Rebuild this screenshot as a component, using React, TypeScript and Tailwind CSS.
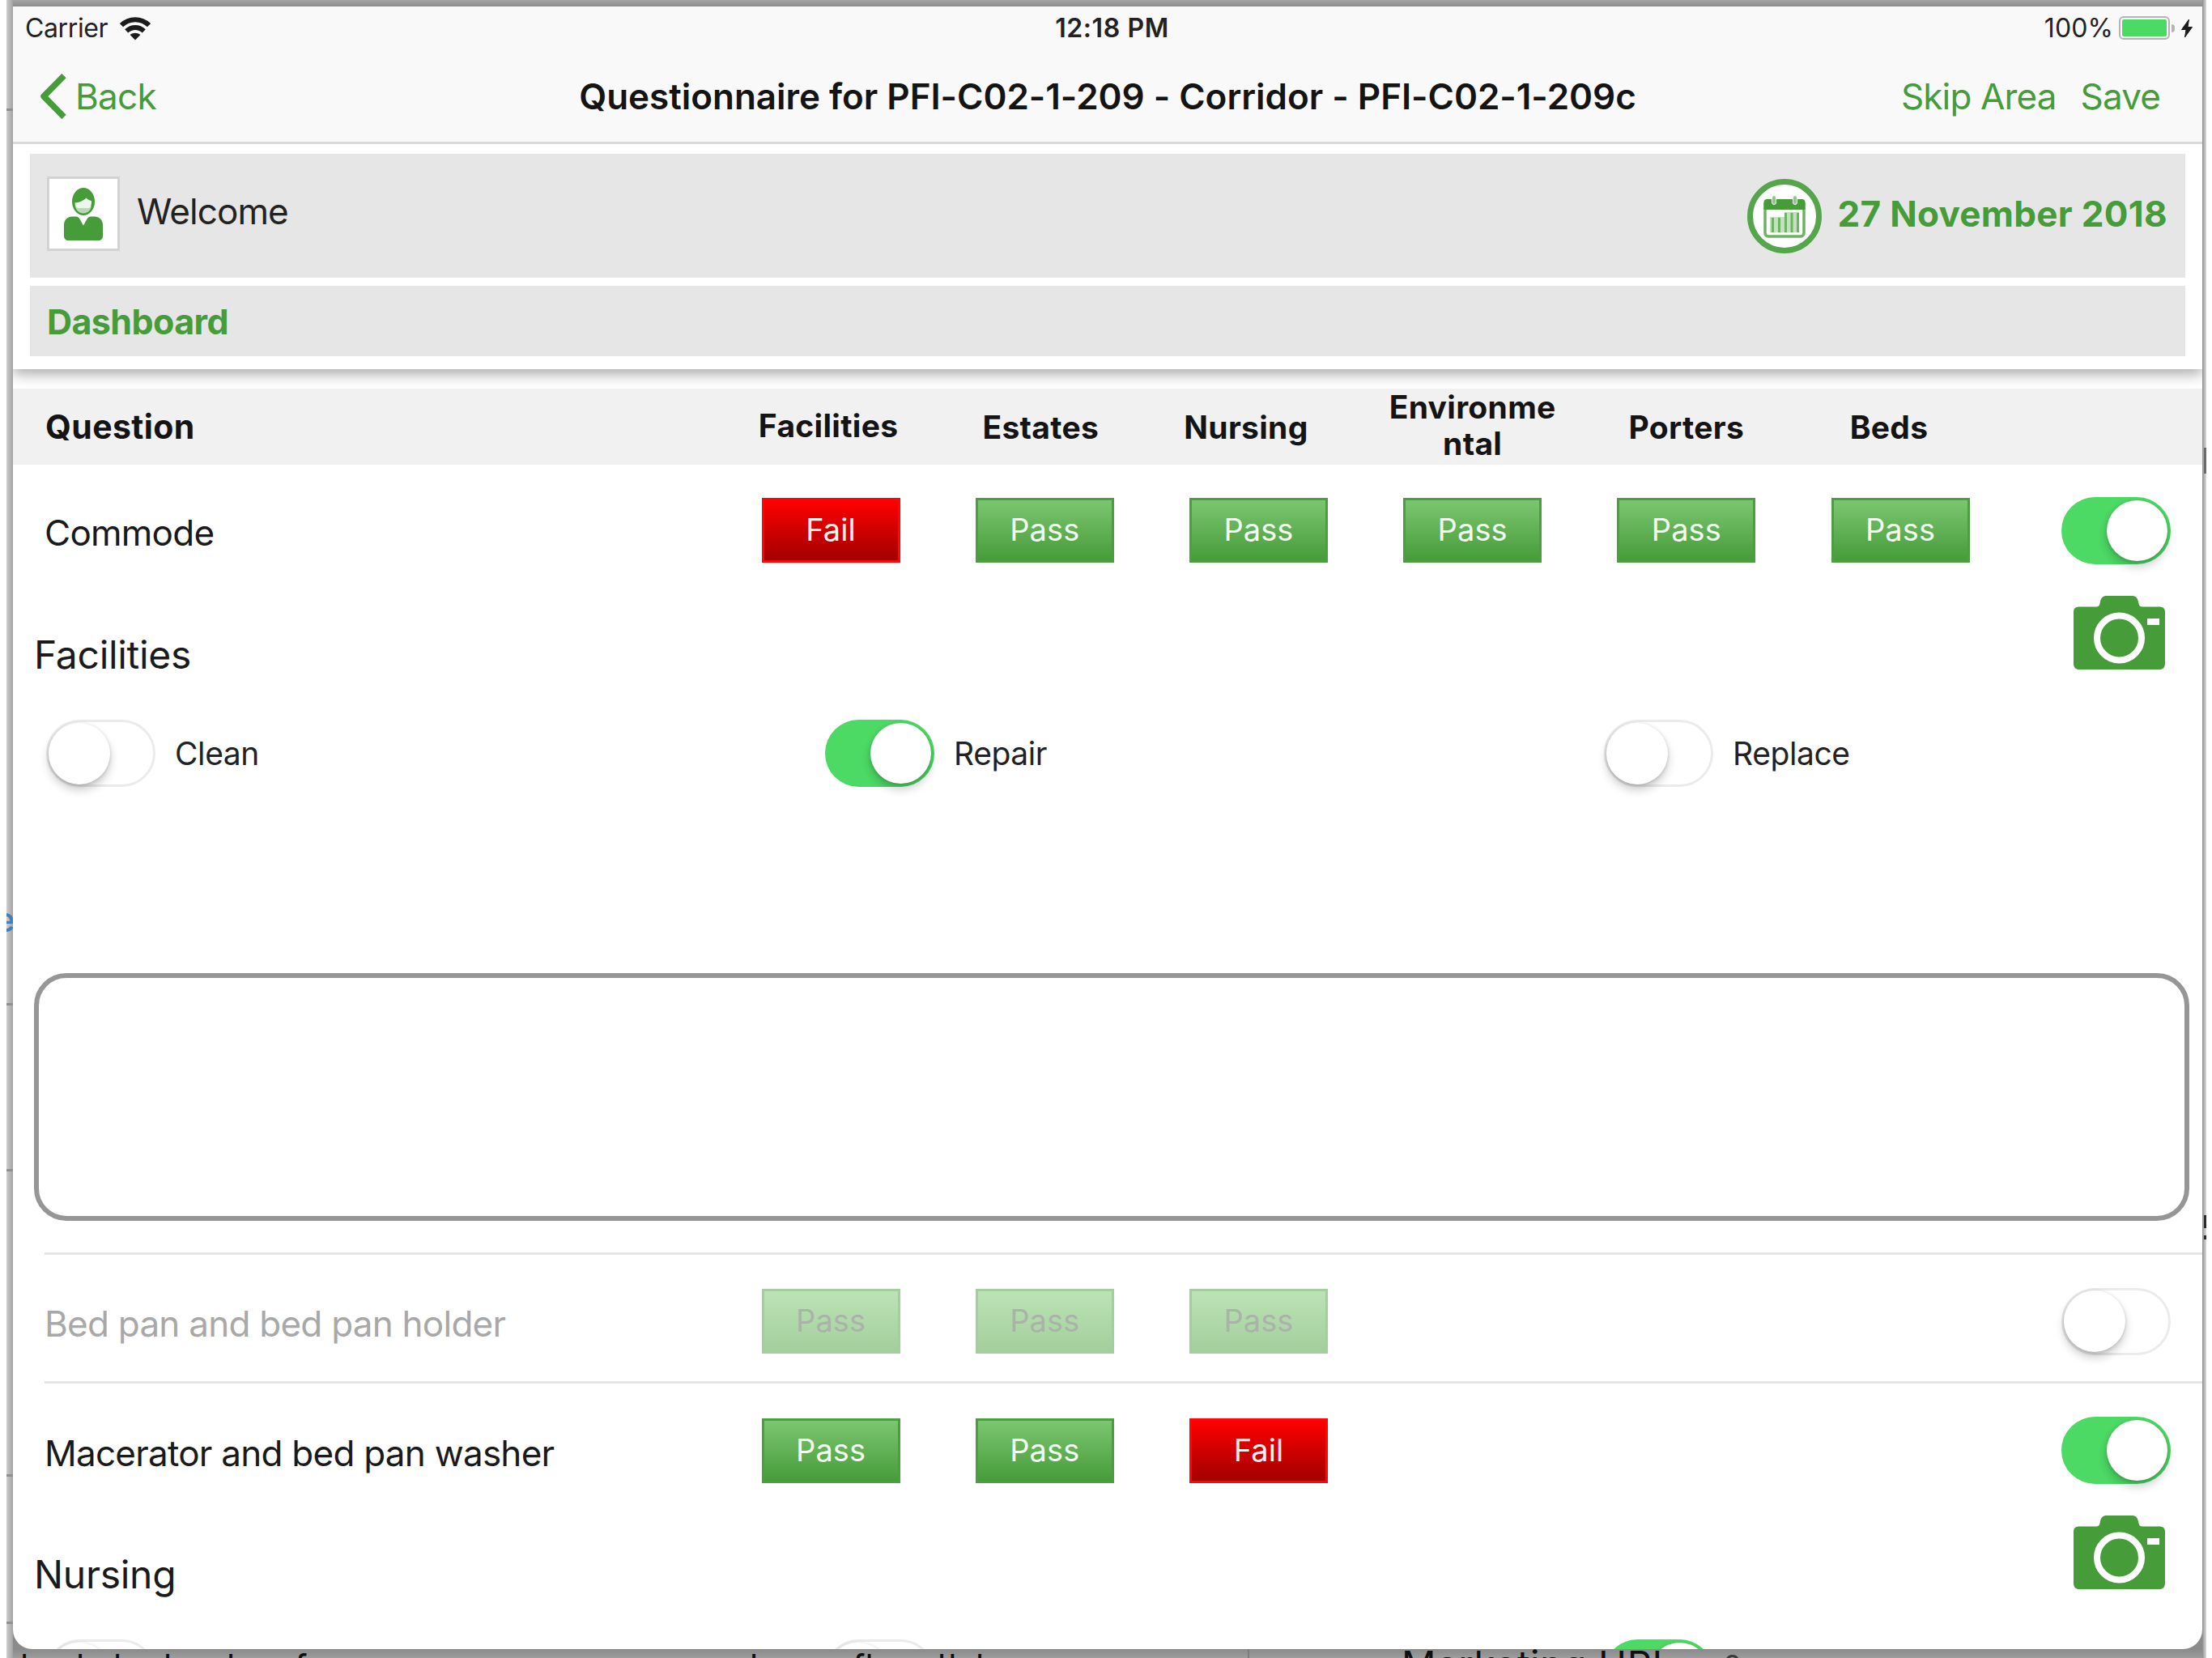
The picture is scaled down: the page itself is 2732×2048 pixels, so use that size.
import type { ReactNode } from "react";

type Verdict = "pass" | "fail";

function WifiIcon() {
  return (
    <svg className="mt-[2px] h-[29px] w-[38px]" viewBox="0 0 38 29" fill="none" stroke="#1c1c1c" strokeWidth="6">
      <path d="M2 10.2C11.5 0.9 26.5 0.9 36 10.2" />
      <path d="M8.2 17.4C14.5 11.6 23.5 11.6 29.8 17.4" />
      <path d="M19 28.6L12.6 22C16.4 18.9 21.6 18.9 25.4 22Z" fill="#1c1c1c" stroke="none" />
    </svg>
  );
}

function BatteryIcon() {
  return (
    <div className="flex items-center">
      <div className="h-[29px] w-[63px] rounded-[6px] border-[2.5px] border-[#b4b4b4] p-[2px]">
        <div className="h-full w-full rounded-[2px] bg-[#4cd964]" />
      </div>
      <div className="ml-[2px] h-[10px] w-[4px] rounded-r-full bg-[#b4b4b4]" />
      <svg className="ml-[8px] h-[24px] w-[14px]" viewBox="0 0 14 24" fill="#1c1c1c" stroke="#1c1c1c" strokeWidth="1">
        <path d="M9.5 1L0.5 13.5H6L4.5 23L13.5 10.5H8Z" />
      </svg>
    </div>
  );
}

function AvatarIcon() {
  return (
    <svg className="h-[65px] w-[48px]" viewBox="0 0 48 65">
      <ellipse cx="24" cy="17" rx="14" ry="17" fill="#459c39" />
      <path d="M13.5 18.5C18 18.2 24.5 16 27.5 12.5C29 14.5 31.5 15.5 34 16.2C34.6 23.5 30.5 30.5 24 30.5C17.5 30.5 13.5 25 13.5 18.5Z" fill="#eef7ed" />
      <path d="M14 22C16 26.5 20 25 24 25C28 25 32 26.5 34 22C33 28 29.5 31.5 24 31.5C18.5 31.5 15 28 14 22Z" fill="#b5dab0" />
      <path d="M0 46C0 39 5 35.5 10 35.5H15C19 35.5 20 40 24 46.5C28 40 29 35.5 33 35.5H38C43 35.5 48 39 48 46V59C48 63 46 65 42 65H6C2 65 0 63 0 59Z" fill="#459c39" />
    </svg>
  );
}

function CalendarIcon() {
  return (
    <svg className="h-[92px] w-[92px]" viewBox="0 0 92 92">
      <circle cx="46" cy="46" r="42.5" fill="#fff" stroke="#55a54a" strokeWidth="7" />
      <rect x="22" y="27" width="48" height="44" rx="4" fill="#fff" stroke="#6db364" strokeWidth="3.5" />
      <path d="M20.5 38V29C20.5 26.5 22 25 24.5 25H67.5C70 25 71.5 26.5 71.5 29V38Z" fill="#459c39" />
      <rect x="30.5" y="20.5" width="5" height="11" rx="2.5" fill="#8fc788" stroke="#fff" strokeWidth="1" />
      <rect x="56.5" y="20.5" width="5" height="11" rx="2.5" fill="#8fc788" stroke="#fff" strokeWidth="1" />
      <path d="M28 47H46V41H64V66H28Z" fill="#c3e1bf" />
      <g fill="#6db364">
        <rect x="30" y="48" width="3" height="18" />
        <rect x="38" y="48" width="3" height="18" />
        <rect x="46" y="42" width="3" height="24" />
        <rect x="53.5" y="42" width="3" height="24" />
        <rect x="61" y="42" width="3" height="24" />
      </g>
    </svg>
  );
}

function CameraIcon() {
  return (
    <svg className="mt-[2.5px] h-[91px] w-[113px]" viewBox="0 0 113 91">
      <path d="M0 20C0 15.5 2.5 13.5 7.500 13.5H28C31 13.5 32 12 32.500 9.500C33.500 3.500 35.500 0 40 0H73C77.500 0 79.500 3.500 80.500 9.500C81 12 82 13.5 85 13.5H105.500C110.500 13.5 113 15.5 113 20V83.500C113 88.500 110.500 91 105.500 91H7.500C2.500 91 0 88.500 0 83.500Z" fill="#459c39" />
      <circle cx="56.5" cy="52" r="27.5" fill="none" stroke="#fff" strokeWidth="8" />
      <rect x="91" y="28" width="15" height="8" fill="#fff" />
    </svg>
  );
}

function Switch({ on }: { on: boolean }) {
  return on ? (
    <div className="flex h-[83px] w-[135px] shrink-0 items-center justify-end rounded-full bg-[#4cd964] pr-[4px]">
      <div className="size-[75px] rounded-full bg-white shadow-[0_7px_12px_rgba(0,0,0,0.2),0_1px_4px_rgba(0,0,0,0.15)]" />
    </div>
  ) : (
    <div className="flex h-[83px] w-[135px] shrink-0 items-center justify-start rounded-full border-[3px] border-[#ebebeb] bg-white">
      <div className="size-[76px] rounded-full bg-white shadow-[0_7px_12px_rgba(0,0,0,0.2),0_1px_4px_rgba(0,0,0,0.16)]" />
    </div>
  );
}

function VerdictButton({ verdict, disabled }: { verdict: Verdict; disabled?: boolean }) {
  const base = "h-[80px] w-[171px] border-[3px] pb-[2px] text-[38px] leading-none tracking-[0.1px] ";
  if (disabled) {
    return <button className={base + "border-[#a3cf9d] bg-linear-to-b from-[#bce3b6] to-[#a3cf9c] text-[#a9b3a8]"}>Pass</button>;
  }
  if (verdict === "fail") {
    return <button className={base + "border-[#ff0505] bg-linear-to-b from-[#ff0000] to-[#a30000] text-[#fff0f0]"}>Fail</button>;
  }
  return <button className={base + "border-[#4b9f3f] bg-linear-to-b from-[#7bc670] to-[#469c39] text-[#f2faf1]"}>Pass</button>;
}

const gridCols = "grid grid-cols-[838px_repeat(6,264.2px)_1fr] pl-[40px]";

function QuestionRow({ label, verdicts, on, className }: { label: string; verdicts: Verdict[]; on: boolean; className: string }) {
  return (
    <div className={gridCols + " items-center pr-[39px] " + className}>
      <div className={"pt-[6px] text-[44px] leading-[60px] tracking-[-0.75px] " + (on ? "text-[#1a1a1a]" : "text-[#a8a8a8]")}>
        <span className="-ml-px">{label}</span>
      </div>
      {[0, 1, 2, 3, 4, 5].map((i) => (
        <div key={i} className="flex justify-center">
          {verdicts[i] && <VerdictButton verdict={verdicts[i]} disabled={!on} />}
        </div>
      ))}
      <div className="flex justify-end">
        <Switch on={on} />
      </div>
    </div>
  );
}

function Option({ on, children }: { on: boolean; children?: ReactNode }) {
  return (
    <div className="flex items-center gap-[24px]">
      <Switch on={on} />
      <span className="pt-px text-[39px] leading-[60px] tracking-[-0.4px] text-[#222]">{children}</span>
    </div>
  );
}

function FailureDetail({ heading, children }: { heading: string; children: ReactNode }) {
  return (
    <>
      <div className="flex h-[156px] items-start justify-between pr-[46px] pl-[26px]">
        <h2 className="mt-[46px] text-[48px] leading-[60px] tracking-[-0.3px] text-[#1a1a1a]">{heading}</h2>
        <CameraIcon />
      </div>
      <div className="grid h-[83px] grid-cols-[962px_962px_1fr] items-center pl-[41px]">{children}</div>
    </>
  );
}

function ColumnHeader({ children, className = "" }: { children: ReactNode; className?: string }) {
  return <div className={"text-center text-[39px] leading-[45.5px] font-bold tracking-[0.3px] text-[#141414] " + className}>{children}</div>;
}

function UnderlyingPage() {
  return (
    <div className="relative h-[11px] overflow-hidden bg-linear-to-b from-[#8a8a8a] to-[#9d9d9d] text-[42px] leading-[50px] text-[#101010]">
      <div className="absolute top-[-3px] left-[9px] flex">
        <span className="w-[69px]">l</span>
        <span className="w-[46px]">l</span>
        <span className="w-[62px]">l</span>
        <span className="w-[78px]">l</span>
        <span className="w-[84px]">l</span>
        <span className="w-[562px]">f</span>
        <span className="w-[127px]">l</span>
        <span className="w-[105px]">fl</span>
        <span className="w-[47px] tracking-[3px]">ll</span>
        <span>l</span>
      </div>
      <div className="absolute top-0 left-[1525px] h-full w-[2px] bg-[#7d7d7d]" />
      <div className="absolute top-[-8px] left-[1715px] flex items-center gap-[62px] whitespace-nowrap">
        <span className="text-[47px] tracking-[0.7px]">Marketing URL</span>
        <span className="pt-[4px] text-[38px] text-[#3c3c3c]">?</span>
      </div>
    </div>
  );
}

export default function App() {
  return (
    <div className="grid h-[2048px] w-[2732px] grid-cols-[8px_8px_2704px_5px_7px] overflow-hidden bg-white font-['Inter',sans-serif]">
      <div />
      <div className="flex flex-col bg-linear-to-r from-[#cfcfcf] to-[#a2a2a2]">
        <div className="mt-[134px] h-[3px] bg-[#8f8f8f]" />
        <div className="mt-[988px] h-[36px] overflow-hidden text-[#3f7fc0]">
          <span className="-ml-[14px] block text-[42px] leading-[22px] font-medium">e</span>
        </div>
        <div className="mt-[78px] h-[3px] bg-[#909090]" />
        <div className="mt-[202px] h-[3px] bg-[#909090]" />
        <div className="mt-[374px] h-[3px] bg-[#909090]" />
        <div className="mt-[179px] h-[3px] bg-[#909090]" />
      </div>

      <div className="flex min-w-0 flex-col">
        <div className="h-[8px] shrink-0 bg-linear-to-b from-[#a6a6a6] to-[#8b8b8b]" />
        <div className="bg-[#8a8a8a]">
          <div className="flex h-[2029px] flex-col overflow-hidden rounded-b-[24px] bg-white">
            <header className="relative z-10 shrink-0 bg-white pb-[16px] shadow-[0_6px_16px_rgba(0,0,0,0.34)]">
              <div className="border-b-[3px] border-[#dadada] bg-[#f9f9f9]">
                <div className="grid h-[52px] grid-cols-[1fr_auto_1fr] items-center pt-px pr-[12px] pl-[15px] text-[32px] leading-[40px] text-[#222]">
                  <div className="flex items-center gap-[15px]">
                    <span className="tracking-[-0.37px]">Carrier</span>
                    <WifiIcon />
                  </div>
                  <span className="pl-[8px] font-semibold tracking-[0.6px]">12:18 PM</span>
                  <div className="flex items-center justify-end gap-[7px]">
                    <span className="tracking-[0.1px]">100%</span>
                    <BatteryIcon />
                  </div>
                </div>
                <div className="grid h-[115px] grid-cols-[1fr_auto_1fr] items-center pt-[2px] pr-[52px] pl-[33px] text-[44px] leading-[60px]">
                  <div className="flex items-center gap-[11px] tracking-[-0.7px] text-[#459c39]">
                    <svg className="h-[56px] w-[33px]" viewBox="0 0 33 56" fill="none" stroke="#459c39" strokeWidth="7.5" strokeLinejoin="round">
                      <path d="M30 2.5L5 28L30 53.5" />
                    </svg>
                    <span>Back</span>
                  </div>
                  <h1 className="ml-[19px] font-semibold tracking-[-0.03px] text-[#141414]">Questionnaire for PFI-C02-1-209 - Corridor - PFI-C02-1-209c</h1>
                  <div className="flex justify-end gap-[30px] tracking-[-0.85px] text-[#459c39]">
                    <span>Skip Area</span>
                    <span>Save</span>
                  </div>
                </div>
              </div>

              <div className="flex flex-col gap-[10px] px-[21px] pt-[12px]">
                <div className="flex h-[153px] items-start justify-between bg-[#e6e6e6] pr-[22px] pl-[21px]">
                  <div className="flex items-start gap-[21px]">
                    <div className="mt-[28px] flex h-[92px] w-[90px] items-center justify-center border-[3px] border-[#d2d2d2] bg-white">
                      <AvatarIcon />
                    </div>
                    <span className="mt-[41px] text-[44px] leading-[60px] tracking-[-0.9px] text-[#222]">Welcome</span>
                  </div>
                  <div className="flex items-start gap-[20px]">
                    <div className="mt-[31px]">
                      <CalendarIcon />
                    </div>
                    <span className="mt-[44px] text-[44px] leading-[60px] font-bold tracking-[0.3px] text-[#459c39]">27 November 2018</span>
                  </div>
                </div>
                <div className="flex h-[87px] items-center bg-[#e6e6e6] pl-[21px]">
                  <span className="text-[43px] leading-[60px] font-bold tracking-[-0.6px] text-[#459c39]">Dashboard</span>
                </div>
              </div>
            </header>

            <main className="flex flex-col pt-[24px]">
              <div className={gridCols + " h-[94px] items-center bg-[#f1f1f1] pr-[39px]"}>
                <span className="text-[41px] leading-[50px] font-bold tracking-[0.4px] text-[#141414]">Question</span>
                <ColumnHeader className="pr-[6px] pb-[2px]">Facilities</ColumnHeader>
                <ColumnHeader className="pt-px pr-[10px]">Estates</ColumnHeader>
                <ColumnHeader className="pt-px pr-[31px]">Nursing</ColumnHeader>
                <ColumnHeader className="-mt-[4px]">
                  Environme
                  <br />
                  ntal
                </ColumnHeader>
                <ColumnHeader className="pt-px">Porters</ColumnHeader>
                <ColumnHeader className="pt-px pr-[28px]">Beds</ColumnHeader>
              </div>

              <QuestionRow className="h-[159px] pt-[3px]" label="Commode" verdicts={["fail", "pass", "pass", "pass", "pass", "pass"]} on />
              <FailureDetail heading="Facilities">
                <Option on={false}>Clean</Option>
                <Option on>Repair</Option>
                <Option on={false}>Replace</Option>
              </FailureDetail>
              <div className="mt-[230px] mr-[16px] ml-[26px] h-[306px] rounded-[40px] border-[6px] border-[#969696]" />

              <div className="mt-[39px] ml-[39px] h-[3px] bg-[#e6e6e9]" />
              <QuestionRow className="h-[156px] pt-[8px]" label="Bed pan and bed pan holder" verdicts={["pass", "pass", "pass"]} on={false} />
              <div className="ml-[39px] h-[3px] bg-[#e6e6e6]" />

              <QuestionRow className="h-[160px] pt-[5px]" label="Macerator and bed pan washer" verdicts={["pass", "pass", "fail"]} on />
              <FailureDetail heading="Nursing">
                <Option on={false} />
                <Option on={false} />
                <Option on />
              </FailureDetail>
            </main>
          </div>
        </div>
        <UnderlyingPage />
      </div>

      <div className="flex flex-col items-end bg-linear-to-r from-[#8f8f8f] to-[#dedede]">
        <div className="mt-[553px] h-[32px] w-[3px] bg-[#6b6b6b]" />
        <div className="mt-[916px] h-[16px] w-[3px] bg-[#2b2b2b]" />
        <div className="mt-[9px] h-[5px] w-[3px] bg-[#2b2b2b]" />
      </div>
      <div />
    </div>
  );
}
